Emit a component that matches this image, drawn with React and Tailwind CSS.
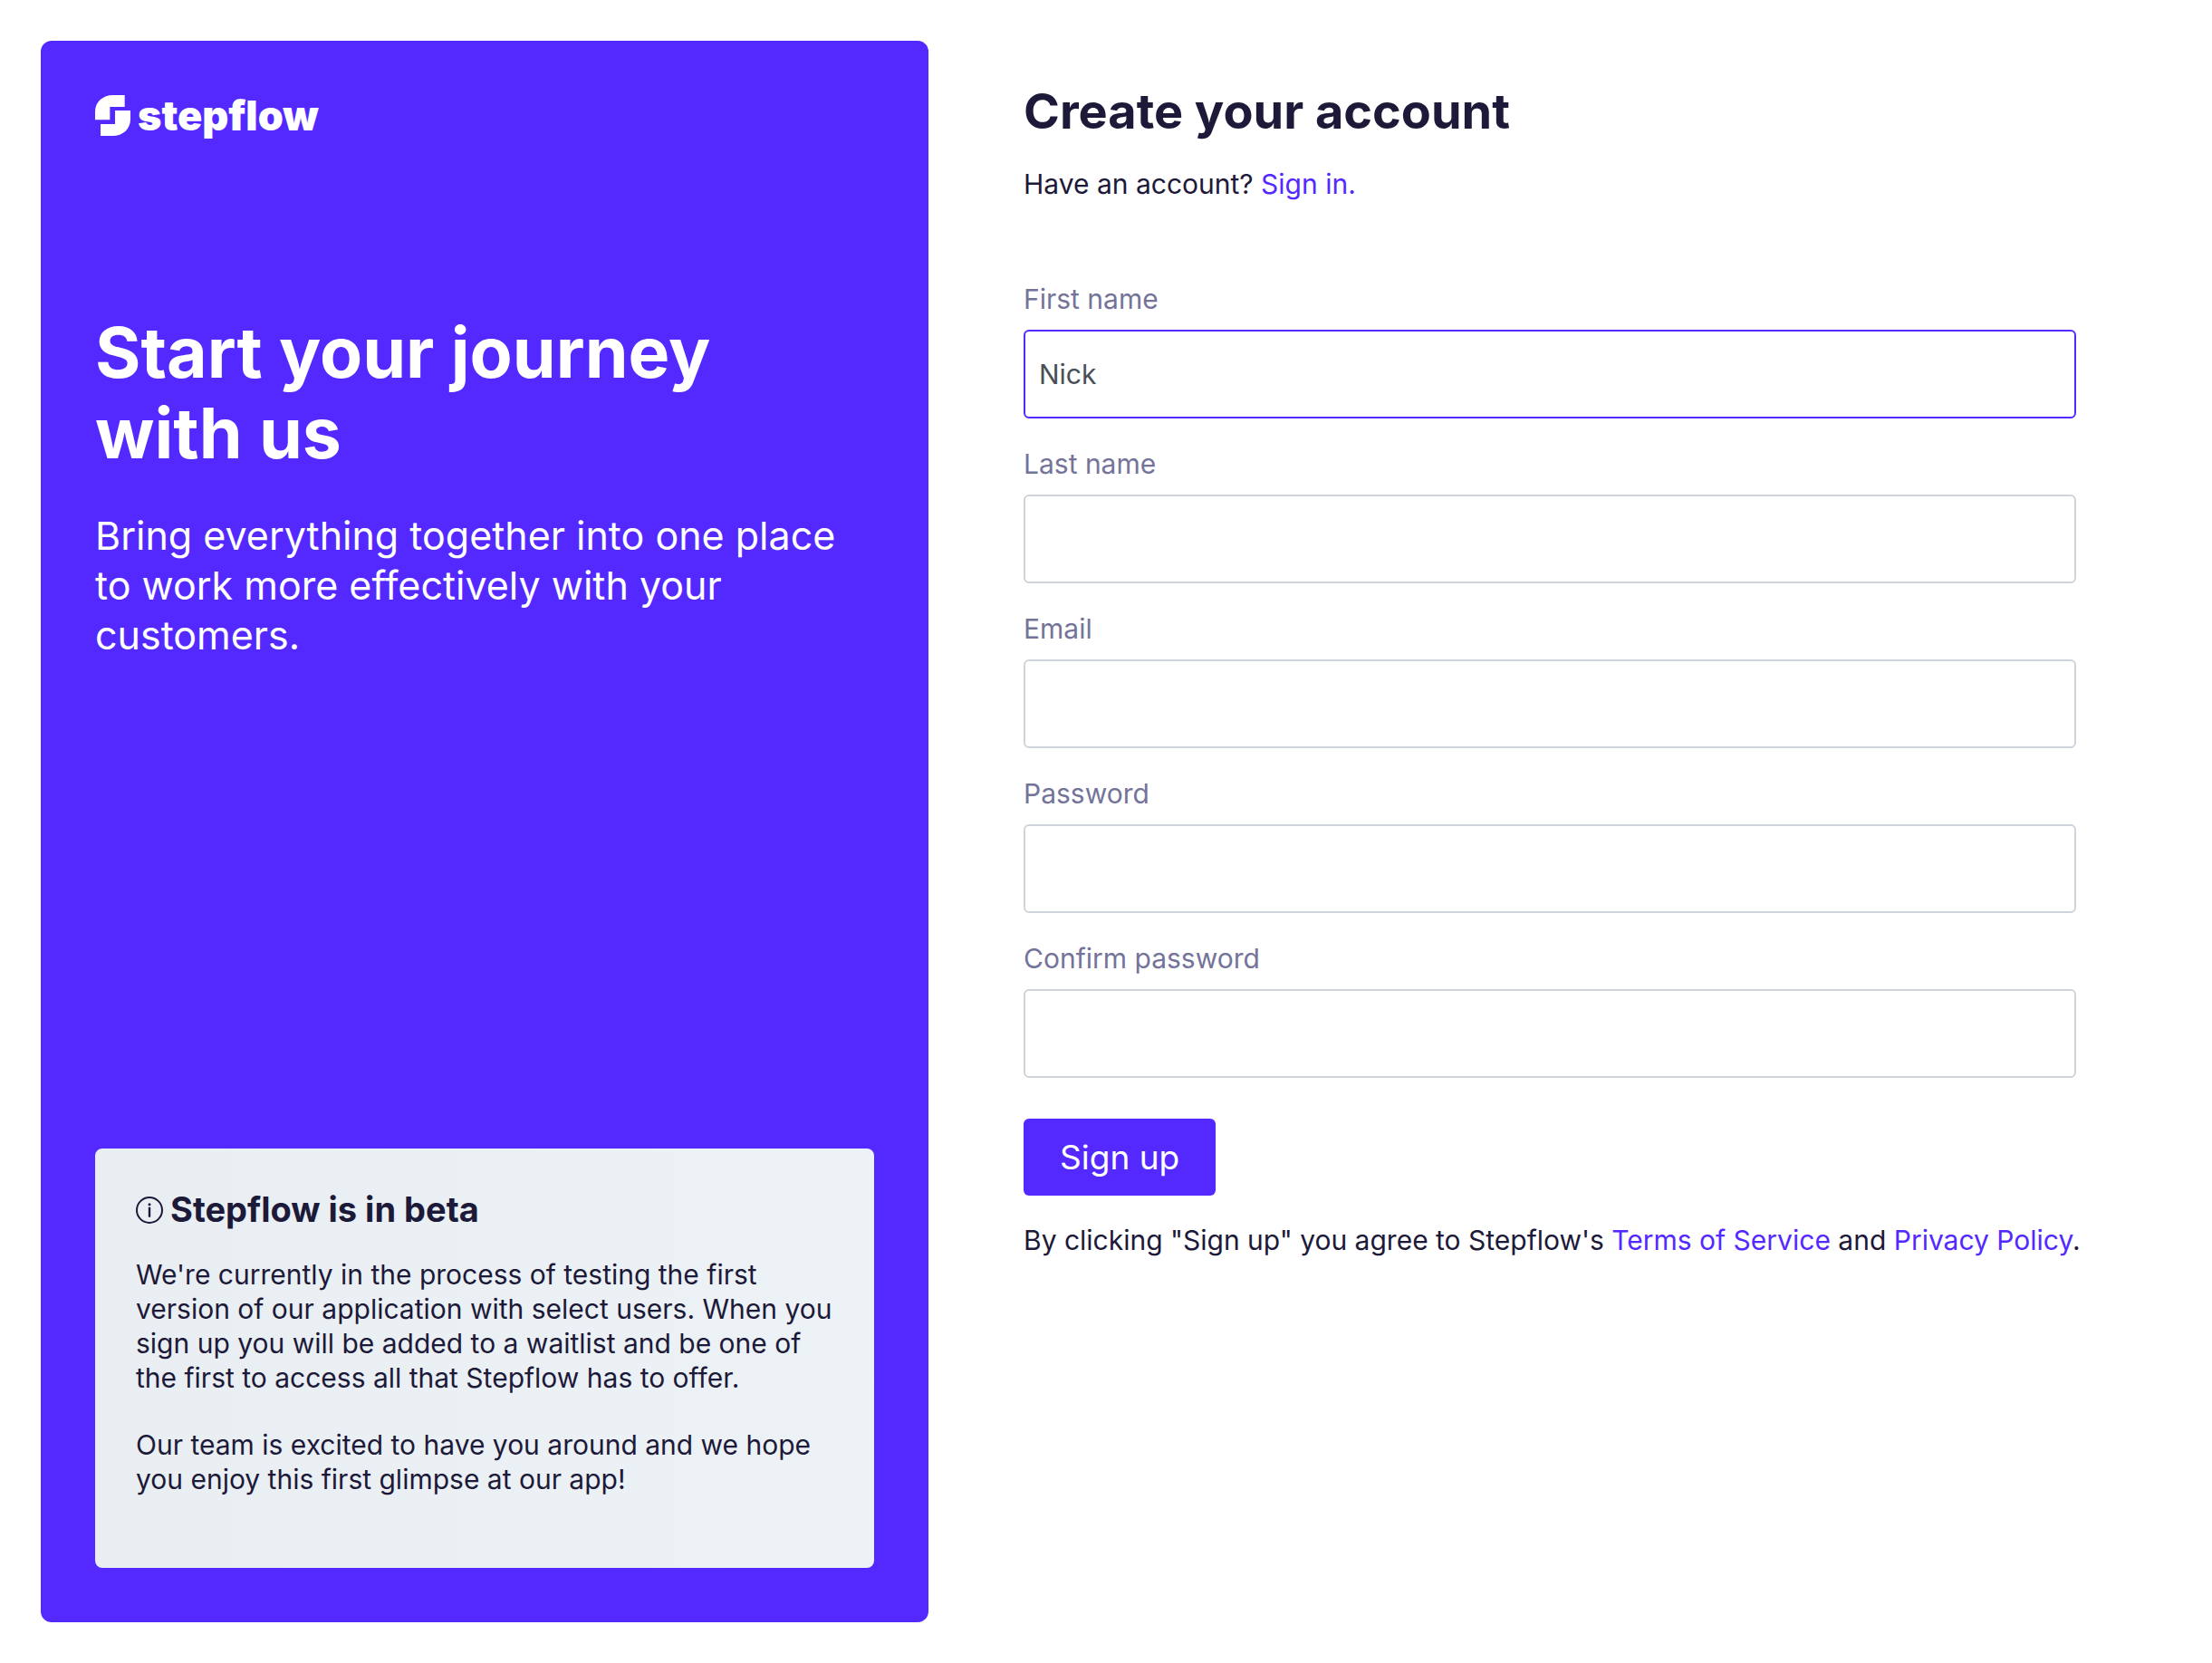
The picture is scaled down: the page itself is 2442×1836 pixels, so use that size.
import { useState } from "react";

const fields = [
  { id: "first-name", label: "First name", type: "text", value: "Nick" },
  { id: "last-name", label: "Last name", type: "text", value: "" },
  { id: "email", label: "Email", type: "email", value: "" },
  { id: "password", label: "Password", type: "password", value: "" },
  { id: "confirm-password", label: "Confirm password", type: "password", value: "" },
];

function LogoMark() {
  return (
    <svg viewBox="0 0 117 135" className="h-[45px] w-[39px]" fill="currentColor" aria-hidden="true">
      <path d="M98 0V39H49V82H0V55C0 22 26 0 60 0Z" />
      <path d="M117 51H66V96H18V135H58C92 135 117 112 117 80Z" />
    </svg>
  );
}

function InfoIcon() {
  return (
    <svg viewBox="0 0 30 30" className="size-[30px] shrink-0" fill="none" aria-hidden="true">
      <circle cx="15" cy="15" r="14" stroke="currentColor" strokeWidth="2" />
      <circle cx="15" cy="8.8" r="1.5" fill="currentColor" />
      <path d="M15 12.6V21.8" stroke="currentColor" strokeWidth="2.4" strokeLinecap="round" />
    </svg>
  );
}

function Field({ id, label, type, value }) {
  const [text, setText] = useState(value);
  return (
    <div className="flex flex-col gap-3.5">
      <label htmlFor={id} className="text-[#74739a]">
        {label}
      </label>
      <input
        id={id}
        type={type}
        value={text}
        onChange={(e) => setText(e.target.value)}
        className={
          "h-[98px] w-full rounded-md border-2 px-[15px] text-[#495057] outline-none focus:border-[#5429ff] " +
          (text ? "border-[#5429ff]" : "border-[#ced4da]")
        }
      />
    </div>
  );
}

export default function App() {
  return (
    <div className="grid min-h-screen grid-cols-12 bg-white p-[45px] font-['Inter',sans-serif] text-[30px] leading-[40px] text-[#1c1939]">
      <aside className="col-span-5 flex flex-col rounded-xl bg-[#5429ff] p-[60px] text-white">
        <div className="flex h-[45px] items-center gap-2">
          <LogoMark />
          <span className="text-[45px] leading-[45px] font-black">stepflow</span>
        </div>
        <h1 className="mt-[195px] max-w-[760px] text-[77px] leading-[89px] font-bold">
          Start your journey with us
        </h1>
        <p className="mt-[41px] text-[43px] leading-[55px]">
          Bring everything together into one place to work more effectively with your customers.
        </p>
        <section className="mt-auto rounded-lg bg-linear-to-r from-[#e9eef3] to-[#edf2f6] px-[45px] pt-[45px] pb-[79px] text-[#1c1939]">
          <h2 className="flex items-center gap-2 text-[38px] leading-[45px] font-bold">
            <InfoIcon />
            Stepflow is in beta
          </h2>
          <p className="mt-[30px] leading-[38px]">
            We're currently in the process of testing the first version of our application with
            select users. When you sign up you will be added to a waitlist and be one of the first
            to access all that Stepflow has to offer.
          </p>
          <p className="mt-9 leading-[38px]">
            Our team is excited to have you around and we hope you enjoy this first glimpse at our
            app!
          </p>
        </section>
      </aside>
      <main className="col-span-7 px-[105px] pt-[45px]">
        <h2 className="text-[54px] leading-[66px] font-bold">Create your account</h2>
        <p className="mt-[27px]">
          Have an account?{" "}
          <a href="#sign-in" className="text-[#5429ff]">
            Sign in.
          </a>
        </p>
        <form className="mt-[87px]" onSubmit={(e) => e.preventDefault()}>
          <div className="flex flex-col gap-[30px]">
            {fields.map((f) => (
              <Field key={f.id} {...f} />
            ))}
          </div>
          <button
            type="submit"
            className="mt-[45px] h-[85px] rounded-md bg-[#5429ff] px-10 text-[37px] leading-[45px] text-white"
          >
            Sign up
          </button>
          <p className="mt-[29px] 2xl:whitespace-nowrap">
            By clicking "Sign up" you agree to Stepflow's{" "}
            <a href="#terms" className="text-[#5429ff]">
              Terms of Service
            </a>{" "}
            and{" "}
            <a href="#privacy" className="text-[#5429ff]">
              Privacy Policy
            </a>
            .
          </p>
        </form>
      </main>
    </div>
  );
}
